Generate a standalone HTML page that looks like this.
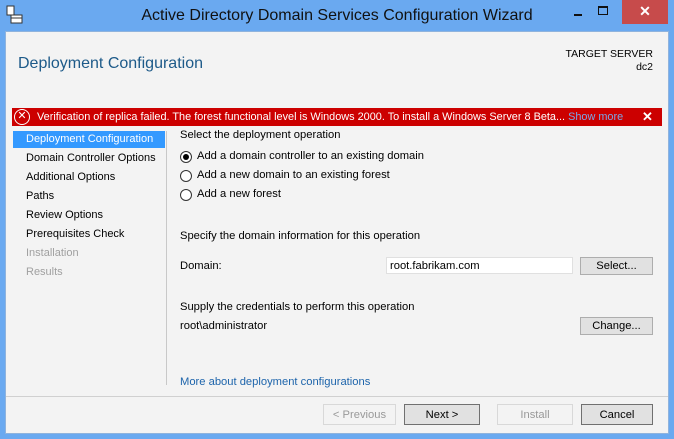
<!DOCTYPE html>
<html><head><style>
*{margin:0;padding:0;box-sizing:border-box}
body{width:674px;height:439px;background:#6aa9f0;font-family:"Liberation Sans",sans-serif;font-size:11.2px;color:#000;position:relative;overflow:hidden}
.a{position:absolute;white-space:nowrap}
#content{position:absolute;left:5px;top:31px;width:664px;height:403px;background:#f3f3f3;border:1px solid #8fb3dd}
.btn{position:absolute;height:21px;background:#e1e1e1;border:1px solid #adadad;text-align:center;line-height:19px;font-size:11.2px}
.side{position:absolute;left:26px;font-size:11px}
.radio{position:absolute;left:180px;width:12px;height:12px;border:1px solid #333;border-radius:50%;background:#fff}
</style></head><body>
<svg class="a" style="left:6px;top:5px" width="18" height="20" viewBox="0 0 18 20"><rect x="1" y="1" width="7" height="9" fill="#fff" stroke="#333"/><rect x="5" y="10" width="11" height="8" fill="#fff" stroke="#333"/><line x1="5" y1="13" x2="16" y2="13" stroke="#333"/></svg>
<div class="a" style="left:0;width:674px;top:7px;text-align:center;font-size:16px;color:#111">Active Directory Domain Services Configuration Wizard</div>
<div class="a" style="left:574px;top:14px;width:8px;height:2px;background:#111"></div>
<div class="a" style="left:598px;top:6px;width:10px;height:9px;border:1px solid #111;border-top-width:2px"></div>
<div class="a" style="left:622px;top:0;width:46px;height:24px;background:#c74b4b;color:#fff;text-align:center;font-size:14px;line-height:22px;font-weight:bold">✕</div>
<div id="content"></div>
<div class="a" style="left:18px;top:55px;font-size:16px;color:#1d5a89">Deployment Configuration</div>
<div class="a" style="right:21px;top:48px;text-align:right;font-size:10.5px;line-height:13px">TARGET SERVER<br>dc2</div>
<div class="a" style="left:12px;top:108px;width:650px;height:18px;background:#cc0000"></div>
<div class="a" style="left:14px;top:109px;width:16px;height:16px;border:1.5px solid #fff;border-radius:50%;color:#fff;font-size:11px;line-height:13px;text-align:center">✕</div>
<div class="a" style="left:37px;top:111px;color:#fff;font-size:10.9px">Verification of replica failed. The forest functional level is Windows 2000. To install a Windows Server 8 Beta... <span style="color:#7aa8e8">Show more</span></div>
<div class="a" style="left:639px;top:109px;color:#fff;font-size:13px;font-weight:bold;background:#cc0000;padding-left:3px">✕</div>
<div class="a" style="left:13px;top:131px;width:152px;height:17px;background:#3399ff"></div>
<div class="side" style="top:133px;color:#fff">Deployment Configuration</div>
<div class="side" style="top:152px">Domain Controller Options</div>
<div class="side" style="top:171px">Additional Options</div>
<div class="side" style="top:190px">Paths</div>
<div class="side" style="top:209px">Review Options</div>
<div class="side" style="top:228px">Prerequisites Check</div>
<div class="side" style="top:247px;color:#a0a0a0">Installation</div>
<div class="side" style="top:266px;color:#a0a0a0">Results</div>
<div class="a" style="left:166px;top:131px;width:1px;height:254px;background:#c8c8c8"></div>
<div class="a" style="left:180px;top:129px">Select the deployment operation</div>
<div class="radio" style="top:151px"><div style="position:absolute;left:2px;top:2px;width:6px;height:6px;border-radius:50%;background:#000"></div></div>
<div class="a" style="left:197px;top:150px">Add a domain controller to an existing domain</div>
<div class="radio" style="top:170px"></div>
<div class="a" style="left:197px;top:169px">Add a new domain to an existing forest</div>
<div class="radio" style="top:189px"></div>
<div class="a" style="left:197px;top:188px">Add a new forest</div>
<div class="a" style="left:180px;top:230px">Specify the domain information for this operation</div>
<div class="a" style="left:180px;top:260px">Domain:</div>
<div class="a" style="left:386px;top:257px;width:187px;height:17px;background:#fff;border:1px solid #e0e0e0;padding-left:3px;line-height:16px">root.fabrikam.com</div>
<div class="btn" style="left:580px;top:257px;width:73px;height:18px;line-height:16px">Select...</div>
<div class="a" style="left:180px;top:301px">Supply the credentials to perform this operation</div>
<div class="a" style="left:180px;top:320px">root\administrator</div>
<div class="btn" style="left:580px;top:317px;width:73px;height:18px;line-height:16px">Change...</div>
<div class="a" style="left:180px;top:376px;color:#1d64ab">More about deployment configurations</div>
<div class="a" style="left:6px;top:396px;width:662px;height:1px;background:#d0d0d0"></div>
<div class="btn" style="left:323px;top:404px;width:73px;background:#f3f3f3;border-color:#d8d8d8;color:#999;line-height:20px">&lt; Previous</div>
<div class="btn" style="left:404px;top:404px;width:76px;border-color:#707070;line-height:20px">Next &gt;</div>
<div class="btn" style="left:497px;top:404px;width:76px;background:#f3f3f3;border-color:#d8d8d8;color:#999;line-height:20px">Install</div>
<div class="btn" style="left:581px;top:404px;width:72px;border-color:#707070;line-height:20px">Cancel</div>
</body></html>
